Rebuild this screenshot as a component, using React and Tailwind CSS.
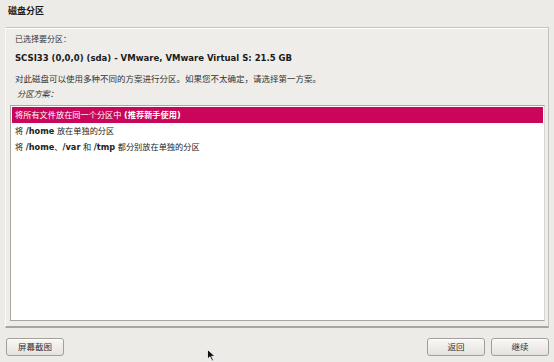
const font = { fontFamily: '"DejaVu Sans", "Noto Sans CJK SC", sans-serif' }

const options = [
  <>将所有文件放在同一个分区中 <b>(推荐新手使用)</b></>,
  <>将 <b>/home</b> 放在单独的分区</>,
  <>将 <b>/home</b>、<b>/var</b> 和 <b>/tmp</b> 都分别放在单独的分区</>,
]

function Btn({ children, className = '' }) {
  return (
    <button
      className={`h-[18px] w-[58px] rounded-[3px] border border-[#a19f99] bg-gradient-to-b from-[#f8f7f5] to-[#e6e3df] text-[8.5px] text-[#2e2e2e] shadow-[inset_0_1px_0_#fff] ${className}`}
    >
      {children}
    </button>
  )
}

export default function App() {
  return (
    <div className="relative w-[554px] h-[362px] bg-[#edebe7] text-[#1a1a1a] overflow-hidden flex flex-col" style={font}>
      <div className="h-[27px] pl-[8px] pt-[5px] text-[9px] font-bold">磁盘分区</div>

      {/* main frame */}
      <div className="mx-[5px] h-[301px] border-t border-t-[#c9c5bf] border-r border-r-[#c4c0ba] border-b-2 border-b-[#a8a59f] border-l border-l-[#fbfaf9] shadow-[inset_0_1px_0_#fff] bg-[#efedea] flex flex-col pl-[4px] pr-[3px]">
        <div className="pl-[5px] pt-[6px] text-[8px] text-[#333]">已选择要分区：</div>
        <div className="pl-[5px] pt-[6px] text-[8.5px] font-bold">SCSI33 (0,0,0) (sda) - VMware, VMware Virtual S: 21.5 GB</div>
        <div className="pl-[5px] pt-[8px] text-[8.5px] text-[#333]">对此磁盘可以使用多种不同的方案进行分区。如果您不太确定，请选择第一方案。</div>
        <div className="pl-[7px] pt-[2px] text-[8.2px] italic text-[#333]">分区方案：</div>
        <div className="mt-[5px] flex-1 mb-[5px] border border-[#a9a6a0] border-r-[#d8d5d0] bg-white p-[1px]">
          {options.map((o, i) => (
            <div
              key={i}
              className={`h-[16px] flex items-center pl-[3px] text-[8.2px] ${i === 0 ? 'bg-[#c9065a] text-white' : 'text-[#222]'}`}
            >
              <span className="whitespace-pre">{o}</span>
            </div>
          ))}
        </div>
      </div>

      {/* bottom buttons */}
      <div className="flex items-center pt-[10px] pl-[6px] pr-[5px]">
        <Btn>屏幕截图</Btn>
        <div className="flex-1" />
        <Btn>返回</Btn>
        <Btn className="ml-[6px]">继续</Btn>
      </div>

      {/* mouse pointer */}
      <svg className="absolute left-[207px] top-[349px]" width="9" height="13" viewBox="0 0 9 13">
        <path d="M0.5 0.5 L0.5 10 L3 7.8 L5 12 L6.5 11.3 L4.6 7.3 L8 7.3 Z" fill="#111" stroke="#fff" strokeWidth="0.8" />
      </svg>
    </div>
  )
}
